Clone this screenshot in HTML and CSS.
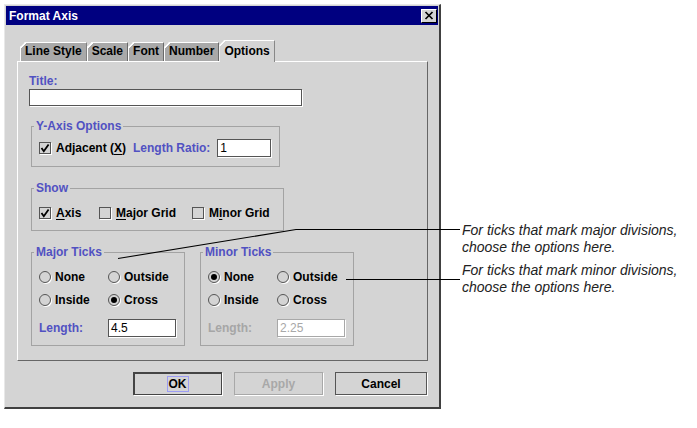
FILE: index.html
```html
<!DOCTYPE html>
<html lang="en">
<head>
    <meta charset="UTF-8">
    <title>Format Axis</title>
    <link rel="stylesheet" href="styles.css">
</head>
<body>

<div class="page">
    <div class="dialog">
        <div class="titlebar">
            <span class="title">Format Axis</span>
            <span class="close">
                <svg width="10" height="9" viewBox="0 0 10 9"><path d="M1.5 1 L8.5 8 M8.5 1 L1.5 8" stroke="#000" stroke-width="1.7" fill="none"/></svg>
            </span>
        </div>

        <!-- tab strip -->
        <div class="tabs">
            <div class="tab">Line Style</div>
            <div class="tab">Scale</div>
            <div class="tab">Font</div>
            <div class="tab">Number</div>
            <div class="tab active">Options</div>
        </div>

        <div class="pane">
            <div class="label">Title:</div>
            <div class="field title-field"></div>

            <fieldset class="group y-axis">
                <legend>Y-Axis Options</legend>
                <div class="row">
                    <span class="check"><svg width="10" height="10" viewBox="0 0 10 10"><path d="M1.5 5 L3.8 8.2 L8.6 1.4" stroke="#000" stroke-width="1.8" fill="none"/></svg></span>
                    <span class="opt">Adjacent (<u>X</u>)</span>
                    <span class="label ratio">Length Ratio:</span>
                    <span class="field ratio-field">1</span>
                </div>
            </fieldset>

            <fieldset class="group show">
                <legend>Show</legend>
                <div class="show-row">
                    <div class="item">
                        <span class="check"><svg width="10" height="10" viewBox="0 0 10 10"><path d="M1.5 5 L3.8 8.2 L8.6 1.4" stroke="#000" stroke-width="1.8" fill="none"/></svg></span>
                        <span class="opt"><u>A</u>xis</span>
                    </div>
                    <div class="item">
                        <span class="check"></span>
                        <span class="opt"><u>M</u>ajor Grid</span>
                    </div>
                    <div class="item">
                        <span class="check"></span>
                        <span class="opt">M<u>i</u>nor Grid</span>
                    </div>
                </div>
            </fieldset>

            <div class="ticks">
                <fieldset class="group tick-group">
                    <legend>Major Ticks</legend>
                    <div class="tick-grid">
                        <div class="item"><span class="radio"></span><span class="ropt">None</span></div>
                        <div class="item"><span class="radio"></span><span class="ropt">Outside</span></div>
                        <div class="item"><span class="radio"></span><span class="ropt">Inside</span></div>
                        <div class="item"><span class="radio on"><span class="dot"></span></span><span class="ropt">Cross</span></div>
                        <div class="item len"><span class="label">Length:</span></div>
                        <div class="item len"><span class="field len-field">4.5</span></div>
                    </div>
                </fieldset>
                <fieldset class="group tick-group">
                    <legend>Minor Ticks</legend>
                    <div class="tick-grid">
                        <div class="item"><span class="radio on"><span class="dot"></span></span><span class="ropt">None</span></div>
                        <div class="item"><span class="radio"></span><span class="ropt">Outside</span></div>
                        <div class="item"><span class="radio"></span><span class="ropt">Inside</span></div>
                        <div class="item"><span class="radio"></span><span class="ropt">Cross</span></div>
                        <div class="item len"><span class="label disabled">Length:</span></div>
                        <div class="item len"><span class="field len-field disabled">2.25</span></div>
                    </div>
                </fieldset>
            </div>
        </div>

        <div class="buttons">
            <div class="btn default"><span class="focus">OK</span></div>
            <div class="btn disabled">Apply</div>
            <div class="btn cancel">Cancel</div>
        </div>
    </div>

    <div class="notes">
        <p>For ticks that mark major divisions,<br>choose the options here.</p>
        <p>For ticks that mark minor divisions,<br>choose the options here.</p>
    </div>
</div>

<!-- leader lines from the notes into the dialog -->
<svg class="leaders" width="697" height="428" viewBox="0 0 697 428">
    <path d="M118 258.5 L296 229.5 L460 229.5" stroke="#000" stroke-width="1.1" fill="none"/>
    <path d="M346 279.5 L460 279.5" stroke="#000" stroke-width="1.1" fill="none"/>
</svg>

</body>
</html>
```

FILE: styles.css
```css
body {
    margin: 0;
    width: 697px;
    height: 428px;
    overflow: hidden;
    position: relative;
    background: #fff;
    font-family: "Liberation Sans", Arial, sans-serif;
    font-size: 12px;
    font-weight: bold;
    color: #000;
}
.page {
    display: flex;
    align-items: flex-start;
    padding: 4px 0 0 4px;
}
.dialog {
    width: 437px;
    height: 405px;
    box-sizing: border-box;
    background: #d4d4d4;
    border-style: solid;
    border-width: 1px 2px 2px 1px;
    border-color: #e8e8e8 #404040 #404040 #e8e8e8;
    padding: 1px;
    display: flex;
    flex-direction: column;
}
.titlebar {
    height: 19px;
    background: #000080;
    color: #fff;
    display: flex;
    align-items: center;
    justify-content: space-between;
    padding-left: 3px;
    line-height: 14px;
}
.close {
    width: 16px;
    height: 14px;
    box-sizing: border-box;
    margin-right: 1px;
    background: #d4d4d4;
    border-style: solid;
    border-width: 1px;
    border-color: #fff #000 #000 #fff;
    display: flex;
    align-items: center;
    justify-content: center;
}

/* Tabs */
.tabs {
    display: flex;
    align-items: flex-end;
    height: 21px;
    margin: 15px 0 0 14px;
    position: relative;
    z-index: 1;
}
.tab {
    position: relative;
    line-height: 14px;
    padding: 1px 4px 3px 4px;
    background: #a9a9a9;
    border-top: 1px solid #fff;
    border-left: 1px solid #fff;
    border-right: 1px solid #6a6a6a;
    clip-path: polygon(5px 0, 100% 0, 100% 100%, 0 100%, 0 5px);
}
.tab::before {
    content: "";
    position: absolute;
    top: -1px;
    left: -1px;
    width: 6px;
    height: 6px;
    background: linear-gradient(to bottom right, transparent calc(50% - 0.8px), #fff calc(50% - 0.8px), #fff calc(50% + 0.8px), transparent calc(50% + 0.8px));
}
.tab.active {
    background: #d4d4d4;
    padding-top: 3px;
    padding-bottom: 4px;
    margin-bottom: -1px;
}

/* Tab pane */
.pane {
    margin: 0 10px 0 11px;
    border-style: solid;
    border-width: 1px;
    border-color: #fff #666 #666 #fff;
    padding: 12px 11px 14px 11px;
}
.label {
    color: #5151c2;
    line-height: 14px;
}
.label.disabled {
    color: #a6a6a6;
}
.field {
    display: flex;
    align-items: center;
    box-sizing: border-box;
    height: 18px;
    padding: 0 2px;
    background: #fff;
    border: 1px solid #555;
    box-shadow: 1px 1px 0 #fff;
    font-weight: normal;
    font-size: 12px;
}
.field.disabled {
    border-color: #a8a8a8;
    color: #a8a8a8;
}
.title-field {
    width: 273px;
    height: 17px;
    margin-top: 1px;
}
.ratio-field {
    width: 54px;
    margin-left: 7px;
}
.len-field {
    width: 68px;
}

/* Group boxes */
.group {
    margin: 13px 0 0 2px;
    padding: 0;
    min-width: 0;
    box-sizing: border-box;
    border: 1px solid #a3a3a3;
}
.group legend {
    margin-left: 2px;
    padding: 0 2px;
    line-height: 14px;
    color: #5151c2;
}
.y-axis {
    width: 249px;
}
.y-axis .row {
    display: flex;
    align-items: center;
    height: 18px;
    padding: 6px 0 9px 7px;
}
.ratio {
    margin-left: 7px;
}
.show {
    width: 253px;
    margin-top: 14px;
}
.show-row {
    display: grid;
    grid-template-columns: 60px 93px auto;
    align-items: center;
    height: 18px;
    padding: 9px 0 8px 7px;
}
.item {
    display: flex;
    align-items: center;
}
.check {
    width: 12px;
    height: 12px;
    box-sizing: border-box;
    border: 1px solid #555;
    box-shadow: 1px 1px 0 #fff;
    display: flex;
    align-items: center;
    justify-content: center;
}
.opt {
    margin-left: 5px;
}
u {
    text-decoration-thickness: 1px;
    text-underline-offset: 2px;
}

/* Major / minor ticks */
.ticks {
    display: flex;
    gap: 15px;
    margin: 14px 0 0 2px;
}
.tick-group {
    width: 154px;
    margin: 0;
}
.tick-grid {
    display: grid;
    grid-template-columns: 69px auto;
    grid-template-rows: 23px 23px 18px;
    row-gap: 0;
    align-items: center;
    padding: 6px 0 8px 7px;
}
.tick-grid .len {
    margin-top: 8px;
    height: 18px;
}
.tick-grid {
    grid-template-rows: 23px 23px 26px;
}
.tick-grid .len {
    align-self: end;
}
.radio {
    width: 12px;
    height: 12px;
    box-sizing: border-box;
    border: 1px solid #555;
    border-radius: 50%;
    box-shadow: 1px 1px 0 #fff;
    display: flex;
    align-items: center;
    justify-content: center;
}
.dot {
    width: 6px;
    height: 6px;
    border-radius: 50%;
    background: #000;
}
.ropt {
    margin-left: 4px;
}

/* Bottom buttons */
.buttons {
    display: flex;
    justify-content: flex-end;
    gap: 12px;
    margin: 11px 11px 0 0;
}
.btn {
    width: 89px;
    height: 23px;
    box-sizing: border-box;
    border: 1px solid #555;
    box-shadow: 1px 1px 0 #fff;
    display: flex;
    align-items: center;
    justify-content: center;
}
.btn.default {
    border-color: #444;
    box-shadow: inset 1px 1px 0 #444, 1px 1px 0 #fff;
}
.focus {
    border: 1px solid #9c9cf4;
    padding: 0 1px;
    line-height: 14px;
}
.btn.disabled {
    border-color: #a8a8a8;
    color: #a8a8a8;
}
.btn.cancel {
    width: 92px;
}

/* Callout text on the right */
.notes {
    margin: 218px 0 0 21px;
    font-size: 14px;
    font-style: italic;
    font-weight: normal;
    line-height: 17px;
    color: #222;
}
.notes p {
    margin: 0 0 6px 0;
}
.leaders {
    position: absolute;
    top: 0;
    left: 0;
    pointer-events: none;
}
```
